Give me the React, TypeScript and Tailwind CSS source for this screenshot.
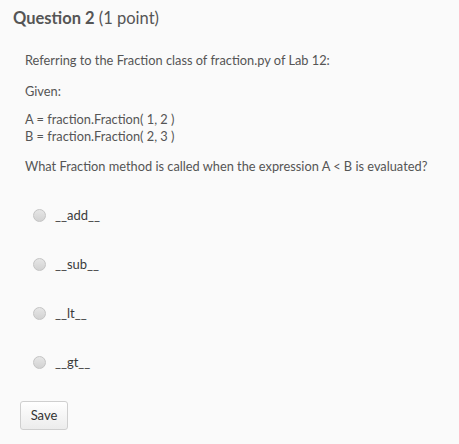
import React from "react";

const options = ["__add__", "__sub__", "__lt__", "__gt__"];

export default function App() {
  return (
    <div className="w-[459px] h-[444px] bg-[#fafafa] text-[#555555] font-['Lato',sans-serif] overflow-hidden">
      <div className="pl-[13px] pt-[7px] h-[36px] text-[16.5px] leading-[22px]">
        <span className="font-bold">Question 2</span> <span>(1 point)</span>
      </div>
      <div className="pl-[25px] pt-[16px] text-[12.8px] leading-[17px]">
        <p>Referring to the Fraction class of fraction.py of Lab 12:</p>
        <p className="mt-[14px]">Given:</p>
        <p className="mt-[11px]">A = fraction.Fraction( 1, 2 )</p>
        <p>B = fraction.Fraction( 2, 3 )</p>
        <p className="mt-[13px]">What Fraction method is called when the expression A &lt; B is evaluated?</p>
      </div>
      <div className="mt-[32px] flex flex-col gap-[32px] pl-[33px]">
        {options.map((o) => (
          <label key={o} className="flex items-center gap-[9px] h-[17px] leading-[17px] text-[13px]">
            <span className="w-[13px] h-[13px] rounded-full border border-[#c4c4c4] bg-gradient-to-b from-[#e6e6e6] to-[#d2d2d2]" />
            <span className="text-[#3a3a3a]">{o}</span>
          </label>
        ))}
      </div>
      <div className="pl-[20px] mt-[30px]">
        <button className="w-[48px] h-[29px] rounded-[3px] border border-[#cfcfcf] bg-gradient-to-b from-[#ffffff] to-[#ececec] text-[13px] text-[#333]">
          Save
        </button>
      </div>
    </div>
  );
}
